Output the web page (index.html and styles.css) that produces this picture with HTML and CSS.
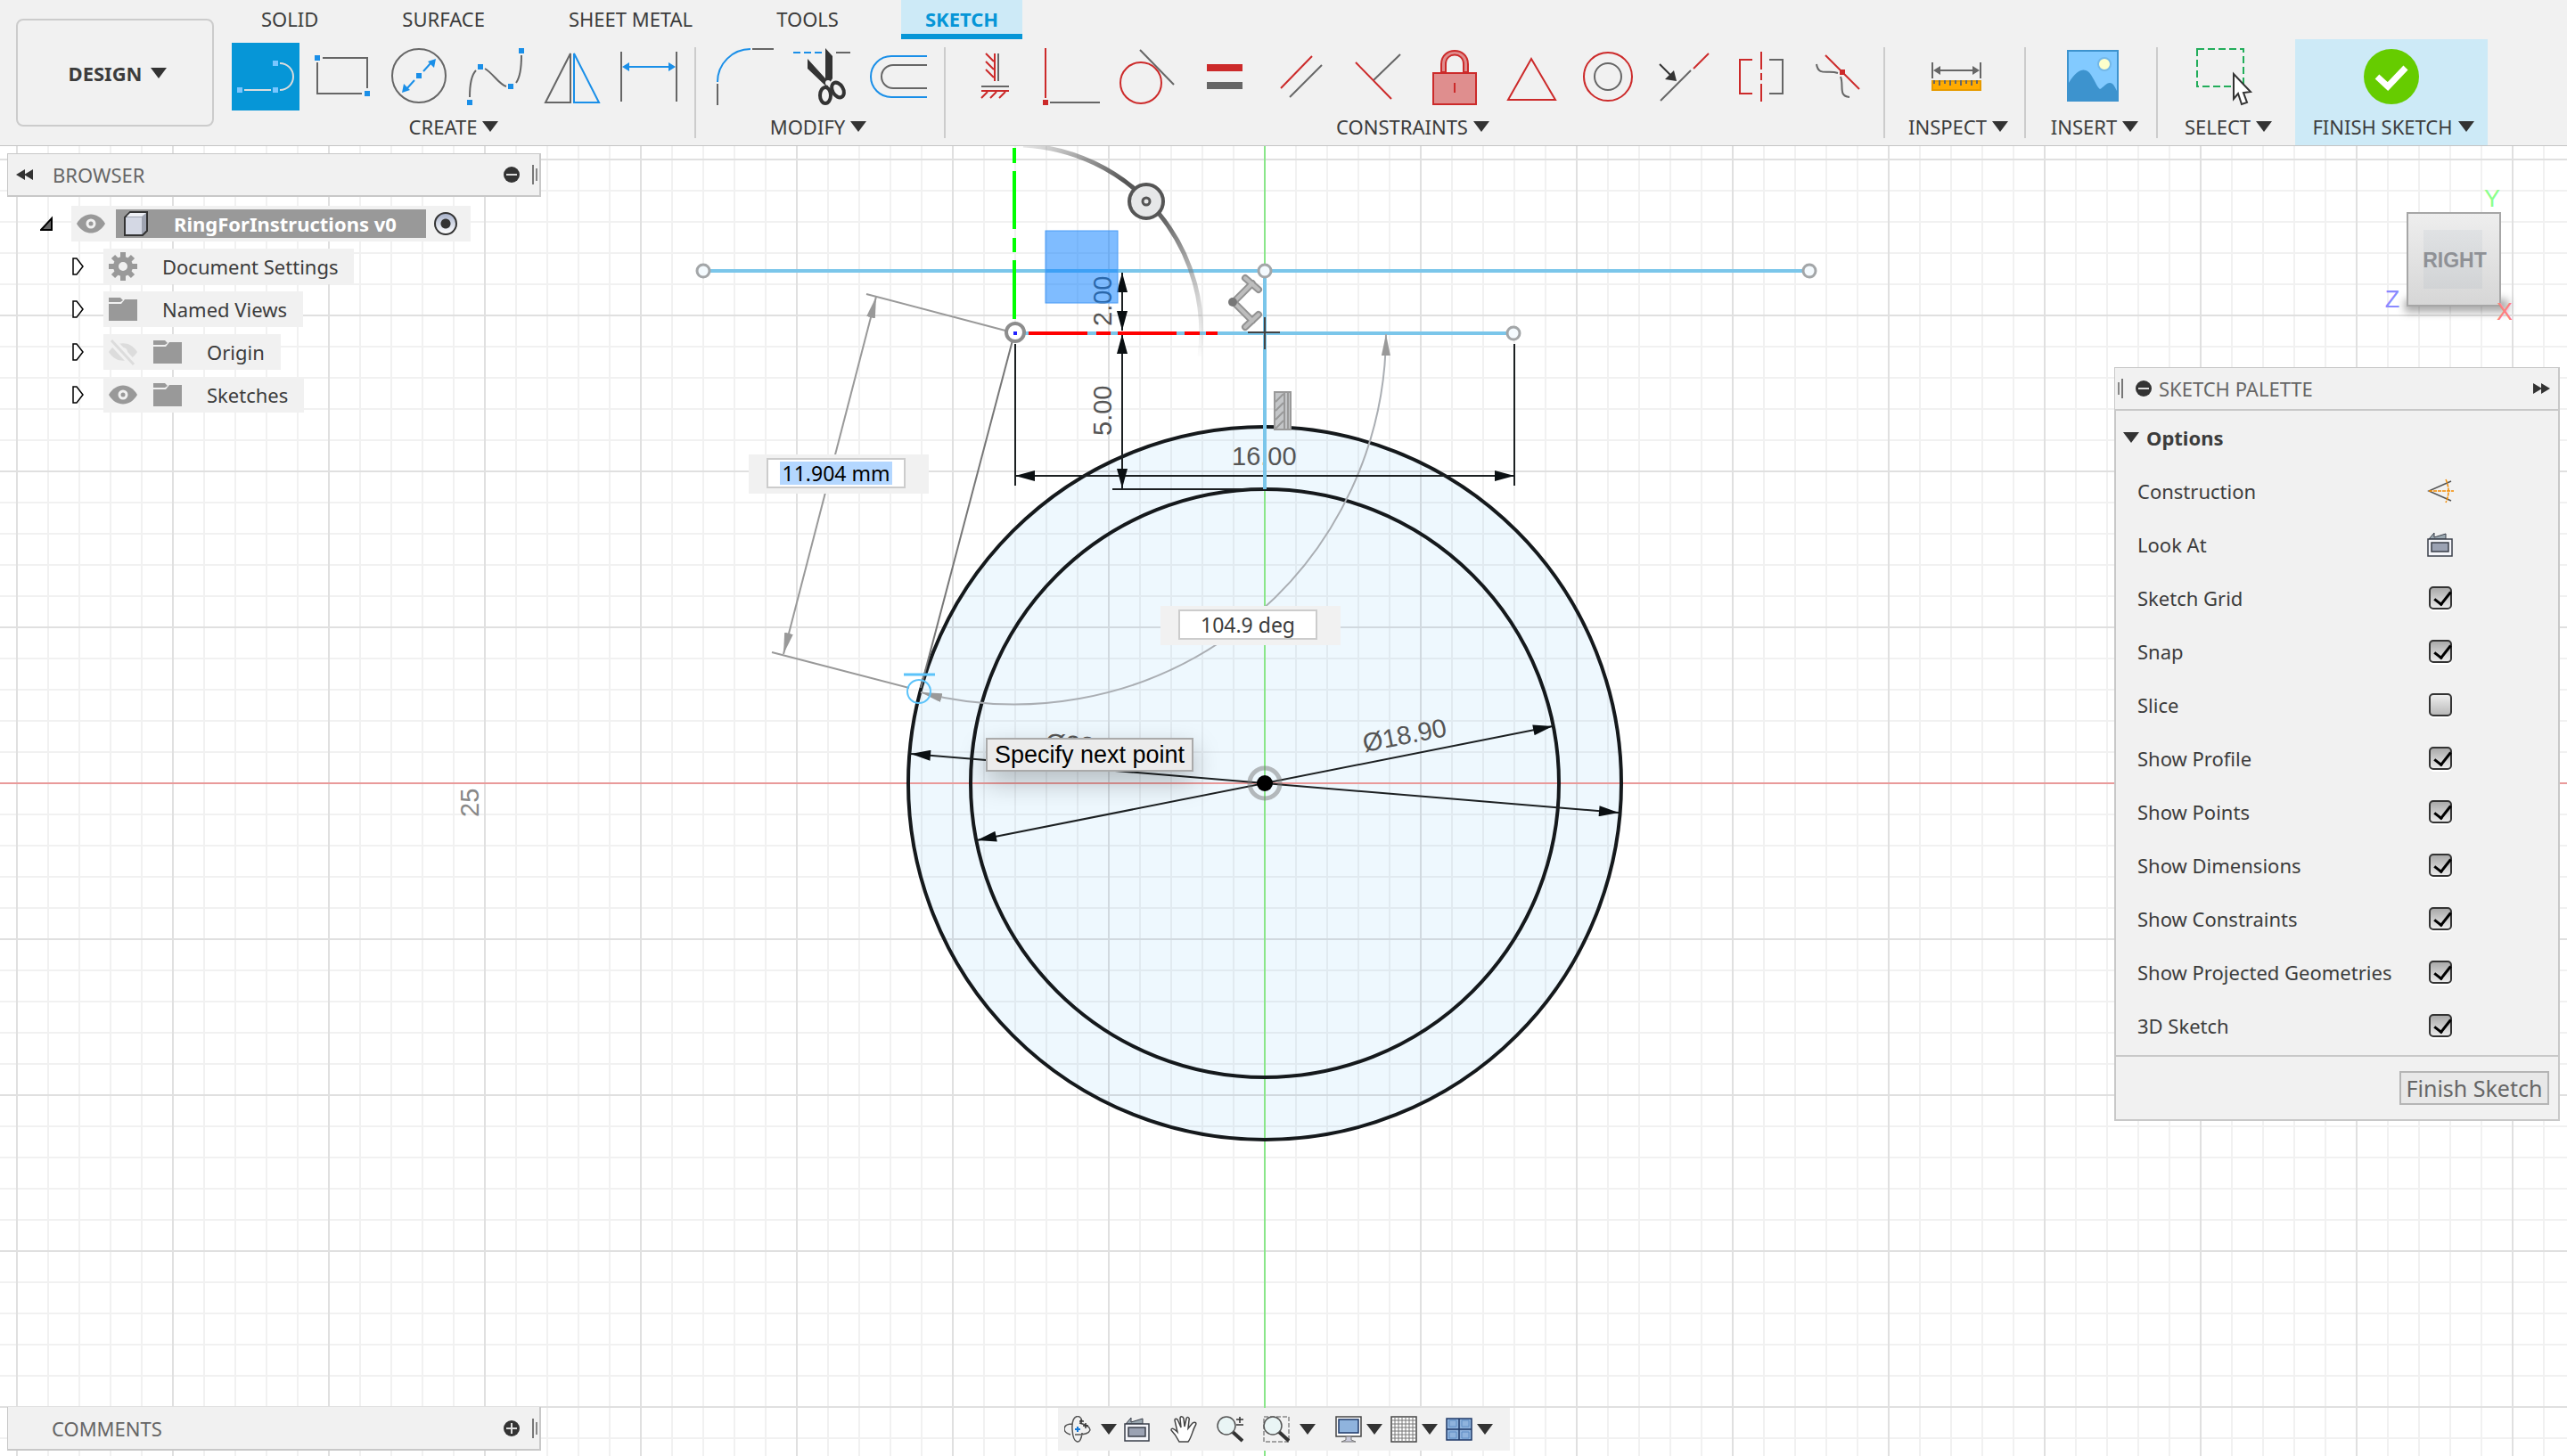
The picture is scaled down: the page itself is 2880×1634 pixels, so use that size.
FILE: index.html
```html
<!DOCTYPE html>
<html lang="en">
<head>
    <meta charset="UTF-8">
    <meta name="viewport" content="width=device-width, initial-scale=1.0">
    <title>RingForInstructions v0</title>
    <link rel="stylesheet" href="styles.css">
</head>
<body>
    <!-- shared icons -->
    <svg class="defs" aria-hidden="true">
        <symbol id="icon-folder" viewBox="0 0 32 32">
            <path d="M0 3h13l3 3-3 2H0z M0 10h14l4-5h14v24H0z" fill="#999"/>
        </symbol>
        <symbol id="icon-eye" viewBox="0 0 32 32">
            <path d="M0 16C8 2 24 2 32 16C24 30 8 30 0 16z" fill="#999"/>
            <circle cx="16" cy="16" r="4" fill="none" stroke="#f1f1f1" stroke-width="3"/>
        </symbol>
        <symbol id="icon-camera" viewBox="0 0 30 30">
            <path d="M2 9L8 2V7L21 3V9z" fill="#9aa7b0" stroke="#3a3f4a"/>
            <rect x="1" y="9" width="27" height="19" fill="#f4f5fa" stroke="#3a3f4a" stroke-width="1.5"/>
            <rect x="5" y="13" width="19" height="10" fill="#9ba2b3" stroke="#3a3f4a" stroke-width="1.5"/>
        </symbol>
        <symbol id="icon-rewind" viewBox="0 0 20 12">
            <path d="M0 6L10 0V12z M9 6L19 0V12z" fill="#333"/>
        </symbol>
        <symbol id="icon-minus" viewBox="0 0 18 18">
            <circle cx="9" cy="9" r="9" fill="#333"/>
            <path d="M3 9H15" stroke="#ddd" stroke-width="2"/>
        </symbol>
        <symbol id="icon-plus" viewBox="0 0 18 18">
            <circle cx="9" cy="9" r="9" fill="#333"/>
            <path d="M3 9H15M9 3V15" stroke="#ddd" stroke-width="2"/>
        </symbol>
    </svg>

    <header class="toolbar">
        <button class="design-btn">DESIGN <i class="caret"></i></button>
        <div class="toolbar-main">
            <nav class="tabs">
                <a href="#" class="tab">SOLID</a>
                <a href="#" class="tab">SURFACE</a>
                <a href="#" class="tab">SHEET METAL</a>
                <a href="#" class="tab">TOOLS</a>
                <a href="#" class="tab active">SKETCH</a>
            </nav>
            <div class="ribbon">
                <div class="group">
                    <div class="tools">
                        <button class="tool" aria-label="Line">
                            <svg class="selected" viewBox="0 0 76 76"><path d="M14 53H44M54 53a15 15 0 0 0 0-30" class="line light"/><path d="M6 50h6v6H6zM46 50h6v6h-6zM46 20h6v6h-6z" fill="#79c6ff"/></svg>
                        </button>
                        <button class="tool" aria-label="Rectangle">
                            <svg viewBox="0 0 76 76"><path d="M16 17H66V51M10 22V57H60" class="line"/><path d="M7 14h6v6H7zM63 54h6v6h-6z" class="dot"/></svg>
                        </button>
                        <button class="tool" aria-label="Circle">
                            <svg viewBox="0 0 76 76"><circle cx="38" cy="37" r="30" class="line"/><path d="M43 32L52 22M33 42L24 52" class="line blue"/><path d="M35 34h6v6h-6zM57 18l-2 10-7-7zM19 56l2-10 7 7z" class="dot"/></svg>
                        </button>
                        <button class="tool" aria-label="Spline">
                            <svg viewBox="0 0 76 76"><path d="M9 61C9 45 12 35 16 31M26 29C35 34 42 47 50 49M61 45C66 38 67 25 67 14" class="line"/><path d="M6 64h6v6H6zM18 24h6v6h-6zM52 46h6v6h-6zM64 6h6v6h-6z" class="dot"/></svg>
                        </button>
                        <button class="tool" aria-label="Mirror">
                            <svg viewBox="0 0 76 76"><path d="M36 12V67H8z" class="line"/><path d="M40 12V67H68z" class="line blue"/></svg>
                        </button>
                        <button class="tool" aria-label="Sketch Dimension">
                            <svg viewBox="0 0 76 76"><path d="M7 10V66M69 10V66" class="line"/><path d="M12 27H64" class="line blue"/><path d="M8 27l8-5v10zM68 27l-8-5v10z" class="dot"/></svg>
                        </button>
                    </div>
                    <button class="group-label">CREATE <i class="caret"></i></button>
                </div>
                <div class="divider"></div>
                <div class="group">
                    <div class="tools">
                        <button class="tool" aria-label="Fillet">
                            <svg viewBox="0 0 76 76"><path d="M7 44A37 37 0 0 1 44 7" class="line blue"/><path d="M46 7H70M7 46V70" class="line"/></svg>
                        </button>
                        <button class="tool" aria-label="Trim">
                            <svg viewBox="0 0 76 76"><path d="M6 11H38" class="line blue" stroke-dasharray="8 4"/><path d="M54 11H70" class="line"/><path d="M42 6L50 15V40L44 50L22 29V18L42 40z" fill="#333"/><ellipse cx="42" cy="59" rx="6" ry="9" class="ring"/><ellipse cx="56" cy="53" rx="6" ry="9" transform="rotate(-30 56 53)" class="ring"/><circle cx="45" cy="45" r="3" fill="#f1f1f1"/></svg>
                        </button>
                        <button class="tool" aria-label="Offset">
                            <svg viewBox="0 0 76 76"><path d="M70 15H30a23 23 0 0 0 0 46H70" class="line blue"/><path d="M70 25H32a13 13 0 0 0 0 26H70" class="line"/></svg>
                        </button>
                    </div>
                    <button class="group-label">MODIFY <i class="caret"></i></button>
                </div>
                <div class="divider"></div>
                <div class="group">
                    <div class="tools">
                        <button class="tool" aria-label="Horizontal/Vertical">
                            <svg viewBox="0 0 76 76"><path d="M38 12V43M28 12L37 21M28 21L37 30M28 30L37 39M23 54H54M23 62L30 55M33 62L40 55M43 62L50 55" class="line red"/><path d="M42 12V43M23 49H54" class="line"/></svg>
                        </button>
                        <button class="tool" aria-label="Coincident">
                            <svg viewBox="0 0 76 76"><path d="M9 6V62" class="line red"/><path d="M14 67H70" class="line"/><path d="M6 64h6v6H6z" fill="#cc2a2a"/></svg>
                        </button>
                        <button class="tool" aria-label="Tangent">
                            <svg viewBox="0 0 76 76"><path d="M29 8L67 47" class="line"/><circle cx="30" cy="45" r="23" class="line red"/></svg>
                        </button>
                        <button class="tool" aria-label="Equal">
                            <svg viewBox="0 0 76 76"><path d="M18 24h40v8H18z" fill="#cc2a2a"/><path d="M18 44h40v8H18z" fill="#666"/></svg>
                        </button>
                        <button class="tool" aria-label="Parallel">
                            <svg viewBox="0 0 76 76"><path d="M15 51L50 15" class="line red"/><path d="M25 61L61 25" class="line"/></svg>
                        </button>
                        <button class="tool" aria-label="Perpendicular">
                            <svg viewBox="0 0 76 76"><path d="M33 42L63 13" class="line"/><path d="M13 22L53 63" class="line red"/></svg>
                        </button>
                        <button class="tool" aria-label="Fix">
                            <svg viewBox="0 0 76 76"><path d="M23 33V24C23 4 53 4 53 24V33H48V24C48 10 28 10 28 24V33zM14 34h48v35H14z" fill="#df8e8e" stroke="#cc2a2a" stroke-width="2"/><path d="M38 45V56" class="line red"/></svg>
                        </button>
                        <button class="tool" aria-label="Midpoint">
                            <svg viewBox="0 0 76 76"><path d="M38 18L65 64H12z" class="line red"/></svg>
                        </button>
                        <button class="tool" aria-label="Concentric">
                            <svg viewBox="0 0 76 76"><circle cx="38" cy="38" r="27" class="line red"/><circle cx="38" cy="38" r="15" class="line"/></svg>
                        </button>
                        <button class="tool" aria-label="Collinear">
                            <svg viewBox="0 0 76 76"><path d="M11 65L45 31" class="line"/><path d="M48 29L65 12" class="line red"/><path d="M10 24L24 38" stroke="#333" stroke-width="2"/><path d="M29 43L16 41L26 31z" fill="#333"/></svg>
                        </button>
                        <button class="tool" aria-label="Symmetry">
                            <svg viewBox="0 0 76 76"><path d="M28 19H14V57H28M38 10V30M38 34V42M38 46V66" class="line red"/><path d="M47 19H62V57H47" class="line"/></svg>
                        </button>
                        <button class="tool" aria-label="Curvature">
                            <svg viewBox="0 0 76 76"><path d="M14 24C16 38 27 30 38 34M41 38C45 48 38 60 51 61" class="line"/><path d="M24 14L62 52" class="line red"/><path d="M40 30h6v6h-6z" fill="#cc2a2a"/></svg>
                        </button>
                    </div>
                    <button class="group-label">CONSTRAINTS <i class="caret"></i></button>
                </div>
                <div class="divider"></div>
                <div class="group">
                    <button class="menu-tool">
                        <svg viewBox="0 0 76 76"><path d="M11 22V40M65 22V40M14 31H62" class="line"/><path d="M12 31l8-5v10zM64 31l-8-5v10z" fill="#666"/><path d="M11 43h54v10H11z" fill="#ffab00" stroke="#e69a00" stroke-width="2"/><path d="M13 42v4M19 42v6M25 42v4M31 42v6M37 42v4M43 42v6M49 42v4M55 42v6M61 42v4" stroke="#666" stroke-width="2"/></svg>
                        <span class="group-label">INSPECT <i class="caret"></i></span>
                    </button>
                </div>
                <div class="divider"></div>
                <div class="group">
                    <button class="menu-tool insert">
                        <svg viewBox="0 0 76 76"><path d="M10 9h56v56H10z" fill="#82caff" stroke="#3d93ce" stroke-width="2"/><circle cx="51" cy="24" r="7" fill="#fdffcb" stroke="#74b8e8" stroke-width="2"/><path d="M11 45C22 27 31 28 36 36C41 44 43 50 46 52C50 50 53 45 57 45C61 45 63 50 65 54V65H11z" fill="#3d93ce"/></svg>
                        <span class="group-label">INSERT <i class="caret"></i></span>
                    </button>
                </div>
                <div class="divider"></div>
                <div class="group">
                    <button class="menu-tool select">
                        <svg viewBox="0 0 76 76"><path d="M3 7H55V49H3z" fill="none" stroke="#22ad5a" stroke-width="2" stroke-dasharray="8 4"/><path d="M44 35V63L49 57L53 69L59 67L55 56L63 55z" fill="#fff" stroke="#333" stroke-width="2"/></svg>
                        <span class="group-label">SELECT <i class="caret"></i></span>
                    </button>
                </div>
                <button class="menu-tool finish">
                    <svg viewBox="0 0 76 76"><circle cx="38" cy="38" r="31" fill="#66cc00"/><path d="M22 38L34 49L54 28" fill="none" stroke="#fff" stroke-width="7"/></svg>
                    <span class="group-label">FINISH SKETCH <i class="caret"></i></span>
                </button>
            </div>
        </div>
    </header>

    <main class="workspace">
        <svg class="canvas" viewBox="0 164 2880 1470" preserveAspectRatio="xMidYMid slice">
            <defs>
                <pattern id="minor" x="1418" y="878" width="35" height="35" patternUnits="userSpaceOnUse">
                    <path d="M0 1H35M1 0V35" stroke="#000" stroke-opacity=".055" stroke-width="2"/>
                </pattern>
                <pattern id="major" x="1418" y="878" width="175" height="175" patternUnits="userSpaceOnUse">
                    <path d="M0 1H175M1 0V175" stroke="#000" stroke-opacity=".07" stroke-width="2"/>
                </pattern>
                <marker id="arrow" markerUnits="userSpaceOnUse" markerWidth="24" markerHeight="12" refX="24" refY="6" orient="auto-start-reverse">
                    <path d="M24 6L2 0V12z" fill="#0a0f12"/>
                </marker>
                <marker id="arrow-gray" markerUnits="userSpaceOnUse" markerWidth="24" markerHeight="10" refX="24" refY="5" orient="auto-start-reverse">
                    <path d="M24 5L0 0V10z" fill="#999"/>
                </marker>
                <linearGradient id="fade" gradientUnits="userSpaceOnUse" x1="1140" y1="164" x2="1350" y2="400">
                    <stop offset="0" stop-color="#666" stop-opacity=".1"/>
                    <stop offset=".35" stop-color="#555"/>
                    <stop offset=".55" stop-color="#666"/>
                    <stop offset="1" stop-color="#999" stop-opacity="0"/>
                </linearGradient>
            </defs>

            <!-- profile, grid and axes -->
            <circle cx="1419" cy="879" r="400" fill="#eef8fe"/>
            <rect y="164" width="2880" height="1470" fill="url(#minor)"/>
            <rect y="164" width="2880" height="1470" fill="url(#major)"/>
            <path d="M0 879H2880" stroke="#e99a9a" stroke-width="2"/>
            <path d="M1419 164V1634" stroke="#8ae68a" stroke-width="2"/>
            <text transform="translate(537 917) rotate(-90)" class="dim axis">25</text>

            <!-- ring -->
            <g fill="none" stroke="#15191c" stroke-width="4">
                <circle cx="1419" cy="879" r="400"/>
                <circle cx="1419" cy="879" r="330"/>
            </g>

            <!-- sketch lines -->
            <path d="M789 304H2030M1138 374H1698" stroke="#7bc6ea" stroke-width="4"/>

            <!-- measured line and angle -->
            <g fill="none" stroke="#999" stroke-width="2">
                <path d="M972 330L1128 371M866 732L1020 772"/>
                <path d="M983 333L879 734" marker-start="url(#arrow-gray)" marker-end="url(#arrow-gray)"/>
                <path d="M1555 375A417 417 0 0 1 1033 777" stroke="#aaaeb3" marker-start="url(#arrow-gray)" marker-end="url(#arrow-gray)"/>
                <path d="M1136 382L1033 772" stroke="#777"/>
            </g>

            <!-- dimensions -->
            <g fill="none" stroke="#1c2022" stroke-width="2">
                <path d="M1139 386V545M1699 386V545M1248 549H1419"/>
                <path d="M1139 534H1699" marker-start="url(#arrow)" marker-end="url(#arrow)"/>
                <path d="M1259 306V371" marker-start="url(#arrow)" marker-end="url(#arrow)"/>
                <path d="M1259 375V548" marker-start="url(#arrow)" marker-end="url(#arrow)"/>
                <path d="M1022 846L1816 912" marker-start="url(#arrow)" marker-end="url(#arrow)"/>
                <path d="M1096 943L1742 815" marker-start="url(#arrow)" marker-end="url(#arrow)"/>
            </g>
            <text transform="translate(1247 366) rotate(-90)" class="dim">2.00</text>
            <text transform="translate(1247 489) rotate(-90)" class="dim">5.00</text>
            <text x="1382" y="522" class="dim">16.00</text>
            <text transform="translate(1531 844) rotate(-11)" class="dim">Ø18.90</text>
            <text transform="translate(1172 843) rotate(5)" class="dim">Ø22.90</text>
            <path d="M1419 304V549" stroke="#7bc6ea" stroke-width="4"/>

            <!-- manipulator -->
            <rect x="1173" y="259" width="81" height="81" fill="#007aff" fill-opacity=".5" stroke="#4a9cf5" stroke-width="1"/>
            <path d="M1148 163A210 210 0 0 1 1346 400" fill="none" stroke="url(#fade)" stroke-width="5"/>
            <circle cx="1286" cy="226" r="19" fill="#e6e7e8" stroke="#555" stroke-width="4"/>
            <circle cx="1286" cy="226" r="4" fill="none" stroke="#555" stroke-width="3"/>
            <path d="M1138 166V183M1138 192V257M1138 267V283M1138 292V358" stroke="#0f0" stroke-width="4"/>
            <path d="M1154 374H1220M1230 374H1246M1254 374H1320M1329 374H1346M1353 374H1366" stroke="#f00" stroke-width="4"/>

            <!-- points -->
            <g fill="#f4fafe" stroke="#a3a6a8" stroke-width="3">
                <circle cx="789" cy="304" r="7"/>
                <circle cx="1419" cy="304" r="7"/>
                <circle cx="2030" cy="304" r="7"/>
                <circle cx="1698" cy="374" r="7"/>
            </g>
            <circle cx="1139" cy="373" r="10" fill="#fff" stroke="#8d8d8d" stroke-width="4"/>
            <rect x="1137" y="372" width="4" height="4" fill="#22f"/>
            <path d="M1400 373H1436M1419 356V392" stroke="#444" stroke-width="2"/>
            <circle cx="1419" cy="879" r="17" fill="none" stroke="#777" stroke-opacity=".5" stroke-width="5"/>
            <circle cx="1419" cy="879" r="9" fill="#000"/>
            <circle cx="1031" cy="776" r="13" fill="none" stroke="#5cc3fa" stroke-width="2"/>
            <path d="M1014 757H1049" stroke="#5cc3fa" stroke-width="3"/>

            <!-- constraint glyphs -->
            <g fill="none" stroke-linecap="round" stroke-linejoin="round">
                <path d="M1397 312L1412 325M1405 318L1384 339L1405 360M1397 367L1412 353" stroke="#929292" stroke-width="8"/>
                <path d="M1397 312L1412 325M1405 318L1384 339L1405 360M1397 367L1412 353" stroke="#bdbdbd" stroke-width="4"/>
            </g>
            <circle cx="1383" cy="339" r="5" fill="#777"/>
            <rect x="1430" y="440" width="18" height="42" fill="#c4c6c8" stroke="#999" stroke-width="2"/>
            <path d="M1441 440V482M1445 440V482M1431 451L1440 442M1431 461L1440 452M1431 471L1440 462M1431 481L1440 472" stroke="#999" stroke-width="2"/>
        </svg>

        <div class="value-box length"><input type="text" value="11.904 mm" aria-label="Length"></div>
        <div class="value-box angle"><input type="text" value="104.9 deg" aria-label="Angle"></div>
        <div class="tooltip">Specify next point</div>

        <div class="panels">
            <section class="browser">
                <div class="panel-bar">
                    <svg class="rewind"><use href="#icon-rewind"/></svg>
                    <h2>BROWSER</h2>
                    <svg class="toggle"><use href="#icon-minus"/></svg>
                    <i class="grip"></i>
                </div>
                <ul class="tree">
                    <li class="root">
                        <svg class="twisty" viewBox="0 0 14 20"><path d="M13 4V17H1z" fill="#666" stroke="#000" stroke-width="2"/></svg>
                        <div class="node">
                            <svg class="icon"><use href="#icon-eye"/></svg>
                            <div class="doc">
                                <svg viewBox="0 0 28 28"><path d="M1 7L7 1H26V22L21 27H1z" fill="#9fa4b1" stroke="#333" stroke-width="2"/><path d="M2 7H20V26H2z" fill="#d4d8e4"/><path d="M3 6L7 2H25L20 6z" fill="#eef0f5"/></svg>
                                <span>RingForInstructions v0</span>
                            </div>
                            <input type="radio" checked aria-label="Activate component">
                        </div>
                    </li>
                    <li>
                        <svg class="twisty" viewBox="0 0 14 20"><path d="M1 1L5 1L12 10L5 19H1z" fill="#fff" stroke="#000" stroke-width="1.5"/></svg>
                        <div class="node">
                            <svg class="icon" viewBox="0 0 32 32"><path d="M16 0V32M0 16H32M5 5L27 27M27 5L5 27" stroke="#999" stroke-width="6"/><circle cx="16" cy="16" r="8" fill="#f1f1f1" stroke="#999" stroke-width="6"/></svg>
                            <span>Document Settings</span>
                        </div>
                    </li>
                    <li>
                        <svg class="twisty" viewBox="0 0 14 20"><path d="M1 1L5 1L12 10L5 19H1z" fill="#fff" stroke="#000" stroke-width="1.5"/></svg>
                        <div class="node">
                            <svg class="icon"><use href="#icon-folder"/></svg>
                            <span>Named Views</span>
                        </div>
                    </li>
                    <li>
                        <svg class="twisty" viewBox="0 0 14 20"><path d="M1 1L5 1L12 10L5 19H1z" fill="#fff" stroke="#000" stroke-width="1.5"/></svg>
                        <div class="node">
                            <svg class="icon" viewBox="0 0 32 32"><path d="M0 16C8 3 24 3 32 16C24 29 8 29 0 16z" fill="#dcdcdc"/><circle cx="16" cy="16" r="5" fill="#f1f1f1"/><path d="M2 2L28 30" stroke="#f1f1f1" stroke-width="9"/><path d="M3 3L28 30" stroke="#dcdcdc" stroke-width="3"/></svg>
                            <svg class="icon second"><use href="#icon-folder"/></svg>
                            <span>Origin</span>
                        </div>
                    </li>
                    <li>
                        <svg class="twisty" viewBox="0 0 14 20"><path d="M1 1L5 1L12 10L5 19H1z" fill="#fff" stroke="#000" stroke-width="1.5"/></svg>
                        <div class="node">
                            <svg class="icon"><use href="#icon-eye"/></svg>
                            <svg class="icon second"><use href="#icon-folder"/></svg>
                            <span>Sketches</span>
                        </div>
                    </li>
                </ul>
            </section>

            <div class="right">
                <svg class="viewcube" viewBox="2670 202 160 170">
                    <defs>
                        <linearGradient id="cube" x1="0" y1="0" x2="0" y2="1"><stop offset="0" stop-color="#eee"/><stop offset="1" stop-color="#d6d6d6"/></linearGradient>
                        <filter id="soft" x="-20%" y="-100%" width="140%" height="300%"><feGaussianBlur stdDeviation="5"/></filter>
                    </defs>
                    <rect x="2698" y="336" width="116" height="14" fill="#000" fill-opacity=".35" filter="url(#soft)"/>
                    <rect x="2701" y="239" width="104" height="104" fill="url(#cube)" stroke="#a6a6a6" stroke-width="2"/>
                    <rect x="2719" y="258" width="66" height="66" fill="#8a9ab0" fill-opacity=".1"/>
                    <text x="2754" y="300" text-anchor="middle" class="face">RIGHT</text>
                    <text x="2796" y="232" text-anchor="middle" fill="#8cff8c" class="axis-name">Y</text>
                    <text x="2684" y="345" text-anchor="middle" fill="#8a8aff" class="axis-name">Z</text>
                    <text x="2810" y="359" text-anchor="middle" fill="#ff7f7f" class="axis-name">X</text>
                </svg>

                <section class="palette">
                    <div class="panel-bar palette-bar">
                        <i class="grip flip"></i>
                        <svg class="toggle"><use href="#icon-minus"/></svg>
                        <h2>SKETCH PALETTE</h2>
                        <svg class="rewind flip"><use href="#icon-rewind"/></svg>
                    </div>
                    <div class="options">
                        <h3><i class="caret"></i>Options</h3>
                        <div class="option">
                            <span>Construction</span>
                            <button class="option-btn" aria-label="Construction">
                                <svg viewBox="0 0 30 30"><path d="M27 4L2 15L27 26" fill="none" stroke="#555" stroke-width="1.5"/><path d="M2 15H30M21 2Q27 15 21 28" fill="none" stroke="#f38b00" stroke-width="1.5" stroke-dasharray="4 1"/></svg>
                            </button>
                        </div>
                        <div class="option">
                            <span>Look At</span>
                            <button class="option-btn" aria-label="Look At"><svg><use href="#icon-camera"/></svg></button>
                        </div>
                        <label class="option"><span>Sketch Grid</span><input type="checkbox" checked></label>
                        <label class="option"><span>Snap</span><input type="checkbox" checked></label>
                        <label class="option"><span>Slice</span><input type="checkbox"></label>
                        <label class="option"><span>Show Profile</span><input type="checkbox" checked></label>
                        <label class="option"><span>Show Points</span><input type="checkbox" checked></label>
                        <label class="option"><span>Show Dimensions</span><input type="checkbox" checked></label>
                        <label class="option"><span>Show Constraints</span><input type="checkbox" checked></label>
                        <label class="option"><span>Show Projected Geometries</span><input type="checkbox" checked></label>
                        <label class="option"><span>3D Sketch</span><input type="checkbox" checked></label>
                    </div>
                    <div class="palette-footer">
                        <button class="finish-btn">Finish Sketch</button>
                    </div>
                </section>
            </div>
        </div>

        <footer class="bottom">
            <div class="panel-bar comments">
                <h2>COMMENTS</h2>
                <svg class="toggle"><use href="#icon-plus"/></svg>
                <i class="grip"></i>
            </div>
            <div class="navbar">
                <button class="nav-btn wide" aria-label="Orbit">
                    <svg viewBox="0 0 30 30"><path d="M20 19C19 33 10 33 9 15S19-2 20 6M7 21C-3 18-2 9 9 9M17 8C35 12 32 22 12 21" fill="none" stroke="#555" stroke-width="1.5"/><path d="M15 12v6M12 15h6" stroke="#1177d8" stroke-width="2"/><path d="M19 4v5M17 6h5M24 8v6M21 11h6" stroke="#333" stroke-width="1.5"/></svg>
                    <i class="caret"></i>
                </button>
                <button class="nav-btn" aria-label="Look At"><svg><use href="#icon-camera"/></svg></button>
                <button class="nav-btn" aria-label="Pan">
                    <svg viewBox="0 0 30 30"><path d="M10 29C7 23 5 20 1 16C1 13 4 14 8 18L5 5C5 2 8 3 9 6L12 13L11 3C11 0 14 0 15 3L16 12L18 3C19 0 22 2 21 5L20 14L25 8C28 6 30 8 28 11C25 16 24 24 20 29z" fill="#fff" stroke="#444" stroke-width="1.5"/></svg>
                </button>
                <button class="nav-btn" aria-label="Zoom">
                    <svg viewBox="0 0 30 30"><path d="M18 18L29 28" stroke="#333" stroke-width="4"/><circle cx="11" cy="11" r="10" fill="#e9f5f5" stroke="#555" stroke-width="1.5"/><path d="M26 1v7M22 4h8M22 10h8" stroke="#333" stroke-width="1.5"/></svg>
                </button>
                <button class="nav-btn wide" aria-label="Fit">
                    <svg viewBox="0 0 30 30"><path d="M1 1H29V29H1z" fill="none" stroke="#888" stroke-width="1.5" stroke-dasharray="5 2"/><path d="M18 18L29 28" stroke="#333" stroke-width="4"/><circle cx="11" cy="11" r="10" fill="#e9f5f5" stroke="#555" stroke-width="1.5"/></svg>
                    <i class="caret"></i>
                </button>
                <button class="nav-btn tight" aria-label="Display Settings">
                    <svg viewBox="0 0 30 30"><path d="M1 1H29V23H1z" fill="#fff" stroke="#444" stroke-width="1.5"/><path d="M4 4H26V19H4z" fill="#8fb3dd" stroke="#1f3a68" stroke-width="1.5"/><path d="M12 23h6v4l5 2H7l5-2z" fill="#ccd" stroke="#777"/></svg>
                    <i class="caret"></i>
                </button>
                <button class="nav-btn tight" aria-label="Grid and Snaps">
                    <svg viewBox="0 0 30 30"><path d="M1 1H29V29H1z" fill="#fff" stroke="#444" stroke-width="1.5"/><path d="M5 1V29M9 1V29M13 1V29M17 1V29M21 1V29M25 1V29M1 5H29M1 9H29M1 13H29M1 17H29M1 21H29M1 25H29" stroke="#777"/></svg>
                    <i class="caret"></i>
                </button>
                <button class="nav-btn tight" aria-label="Viewports">
                    <svg viewBox="0 0 30 30"><path d="M1 3H29V27H1z" fill="#8fb3dd" stroke="#1f3a68" stroke-width="1.5"/><path d="M15 3V27M1 15H29" stroke="#1f3a68" stroke-width="1.5"/><path d="M4 5h8v7H4zM18 5h8v7h-8zM4 18h8v7H4zM18 18h8v7h-8z" fill="none" stroke="#5f8dc4"/></svg>
                    <i class="caret"></i>
                </button>
            </div>
        </footer>
    </main>
</body>
</html>
```
FILE: styles.css
```css
* {
    margin: 0;
    padding: 0;
    box-sizing: border-box;
}

body {
    display: flex;
    flex-direction: column;
    min-height: 100vh;
    font-family: "Noto Sans", "Open Sans", sans-serif;
    font-size: 22px;
    line-height: 30px;
    color: #3c3c3c;
    background: #fff;
}

button {
    font: inherit;
    color: inherit;
    background: none;
    border: none;
    cursor: pointer;
}

svg {
    display: block;
}

.defs {
    position: absolute;
    width: 0;
    height: 0;
}

.caret {
    display: inline-block;
    flex: none;
    border-left: 9px solid transparent;
    border-right: 9px solid transparent;
    border-top: 12px solid #333;
}

/* toolbar */
.toolbar {
    display: flex;
    align-items: flex-start;
    background: #f1f1f1;
    border-bottom: 1px solid #c4c4c4;
}

.design-btn {
    display: flex;
    align-items: center;
    justify-content: center;
    gap: 10px;
    width: 222px;
    height: 121px;
    margin: 21px 0 0 18px;
    padding-left: 6px;
    border: 2px solid #ccc;
    border-radius: 8px;
    font-weight: 700;
}

.tabs {
    display: flex;
    gap: 46px;
    height: 44px;
    padding-left: 29px;
}

.tab {
    padding: 6px 24px 0;
    color: #3c3c3c;
    text-decoration: none;
}

.tab.active {
    padding: 6px 27px 0;
    color: #0696d7;
    background: #cdeaf7;
    border-bottom: 6px solid #0696d7;
    font-weight: 700;
}

.ribbon {
    display: flex;
    align-items: center;
    height: 119px;
    padding-left: 3px;
}

.divider {
    width: 2px;
    height: 102px;
    background: #ccc;
}

.group {
    padding: 4px 8px 0 12px;
    align-self: flex-start;
}

.tools {
    display: flex;
}

.tool {
    width: 86px;
}

.tool svg,
.menu-tool svg {
    width: 76px;
    height: 76px;
    margin: 0 auto;
}

.selected {
    background: #0696d7;
}

.group-label {
    display: flex;
    align-items: center;
    justify-content: center;
    gap: 6px;
    width: 100%;
    height: 36px;
    padding-right: 8px;
    white-space: nowrap;
}

.menu-tool {
    width: 136px;
}

.menu-tool .group-label {
    padding: 0 0 0 4px;
}

.insert {
    width: 126px;
}

.select {
    width: 134px;
}

.select .group-label {
    padding: 0;
}

.finish {
    display: flex;
    flex-direction: column;
    align-self: stretch;
    width: 216px;
    padding-top: 4px;
    background: #cdeaf7;
}

.line {
    fill: none;
    stroke: #666;
    stroke-width: 2;
}

.light {
    stroke: #dcdcdc;
}

.blue {
    stroke: #1a8fe8;
}

.red {
    stroke: #cc2a2a;
}

.dot {
    fill: #1a8fe8;
}

.ring {
    fill: none;
    stroke: #333;
    stroke-width: 4;
}

/* workspace */
.workspace {
    position: relative;
    display: flex;
    flex: 1;
    flex-direction: column;
    justify-content: space-between;
    overflow: hidden;
}

.canvas {
    position: absolute;
    inset: 0;
    width: 100%;
    height: 100%;
}

.dim {
    font-family: "Liberation Sans", Arial, sans-serif;
    font-size: 29px;
    fill: #555;
}

.axis {
    fill: #888;
}

.value-box {
    position: absolute;
    z-index: 1;
    width: 202px;
    height: 44px;
    padding: 4px 20px;
    background: #f1f1f1;
}

.value-box input {
    display: block;
    height: 34px;
    width: 156px;
    padding: 2px 13px;
    border: 2px solid #ccc;
    background: #fff;
    font: inherit;
    font-size: 23px;
    color: #3c3c3c;
    text-align: center;
}

.length {
    left: 840px;
    top: 346px;
}

.length input {
    background: linear-gradient(#b4d7ff, #b4d7ff) content-box, #fff;
    color: #000;
}

.angle {
    left: 1302px;
    top: 516px;
}

.tooltip {
    position: absolute;
    z-index: 1;
    left: 1106px;
    top: 664px;
    padding: 2px 8px;
    border: 2px solid #aaa;
    background: #ececec;
    box-shadow: 0 12px 30px rgba(0, 0, 0, 0.25);
    font-family: "Liberation Sans", Arial, sans-serif;
    font-size: 27px;
    line-height: 30px;
    color: #000;
    white-space: nowrap;
}

.panels {
    position: relative;
    display: flex;
    justify-content: space-between;
    align-items: flex-start;
    padding: 8px 8px 0;
}

.panel-bar {
    display: flex;
    align-items: center;
    height: 49px;
    padding: 0 2px 0 9px;
    background: #f1f1f1;
    border: 1px solid #c8c8c8;
    border-width: 1px 2px 2px 1px;
}

.panel-bar h2 {
    flex: 1;
    font-size: 22px;
    font-weight: 400;
    color: #666;
}

.rewind {
    width: 20px;
    height: 12px;
    margin-right: 21px;
}

.toggle {
    width: 18px;
    height: 18px;
}

.grip {
    width: 6px;
    height: 22px;
    margin-left: 14px;
    border-left: 2px solid #777;
    background: linear-gradient(#888, #888) no-repeat 2px 4px / 2px 14px;
}

.browser,
.comments {
    width: 599px;
}

/* tree */
.tree {
    list-style: none;
    padding-top: 10px;
}

.tree li {
    display: flex;
    align-items: center;
    gap: 21px;
    margin-bottom: 8px;
    padding-left: 73px;
}

.tree .root {
    padding-left: 37px;
}

.twisty {
    width: 14px;
    height: 20px;
}

.node {
    display: flex;
    align-items: center;
    height: 40px;
    padding: 0 18px 0 6px;
    background: #f1f1f1;
}

.node span {
    padding-left: 28px;
}

.icon {
    width: 32px;
    height: 32px;
}

.second {
    margin-left: 18px;
}

.doc {
    display: flex;
    align-items: center;
    width: 348px;
    height: 32px;
    margin: 0 9px 0 12px;
    padding-left: 9px;
    background: #999;
    color: #fff;
    font-weight: 700;
    white-space: nowrap;
}

.doc svg {
    flex: none;
    width: 28px;
    height: 28px;
}

.root .node {
    padding-right: 15px;
}

.root input {
    appearance: none;
    width: 26px;
    height: 26px;
    border: 2px solid #333;
    border-radius: 50%;
    background: radial-gradient(circle, #333 5px, transparent 6px), linear-gradient(#a9b3cc, #fff);
}

/* right side */
.right {
    display: flex;
    flex-direction: column;
    align-items: flex-end;
    padding-top: 30px;
}

.viewcube {
    width: 160px;
    height: 170px;
    margin: 0 42px 40px 0;
}

.face {
    font-family: "Liberation Sans", Arial, sans-serif;
    font-size: 23px;
    font-weight: 700;
    fill: #8f9196;
}

.axis-name {
    font-family: "Liberation Sans", Arial, sans-serif;
    font-size: 27px;
}

.palette {
    width: 500px;
}

.palette-bar {
    padding: 0 9px 0 3px;
}

.palette-bar .toggle {
    margin: 0 8px 0 14px;
}

.flip {
    transform: scaleX(-1);
}

.palette-bar .grip,
.palette-bar .rewind {
    margin: 0;
}

.options {
    padding: 10px 8px 3px;
    background: #f1f1f1;
    border: 2px solid #c8c8c8;
    border-top: 0;
}

.options h3 {
    display: flex;
    align-items: center;
    gap: 8px;
    height: 40px;
    margin-bottom: 10px;
    font-size: 22px;
    font-weight: 700;
}

.option {
    display: flex;
    align-items: center;
    justify-content: space-between;
    height: 60px;
    padding: 0 111px 0 16px;
}

.option-btn {
    margin-right: -2px;
}

.option-btn svg {
    width: 30px;
    height: 30px;
}

.option input {
    appearance: none;
    width: 26px;
    height: 26px;
    border: 2px solid #333;
    border-radius: 5px;
    background: linear-gradient(#eee, #b9b9b9);
    box-shadow: 0 2px 0 #fff;
}

.option input:checked {
    background: linear-gradient(#aaa, #eaeaea);
}

.option input:checked::before {
    content: "";
    display: block;
    width: 8px;
    height: 16px;
    margin: 0 0 0 8px;
    border: solid #000;
    border-width: 0 3px 3px 0;
    transform: rotate(38deg);
}

.palette-footer {
    display: flex;
    justify-content: flex-end;
    padding: 16px 10px;
    background: #f1f1f1;
    border: 2px solid #c8c8c8;
    border-top: 0;
}

.finish-btn {
    width: 168px;
    height: 38px;
    border: 2px solid #b5b5b5;
    background: #e8e8e8;
    color: #666;
    font-size: 25px;
    line-height: 32px;
    white-space: nowrap;
}

/* bottom */
.bottom {
    position: relative;
    display: grid;
    grid-template-columns: 1fr auto 1fr;
    align-items: end;
    padding: 0 8px 6px;
}

.comments {
    padding-left: 49px;
    border-top: 0;
}

.navbar {
    display: flex;
    gap: 22px;
    height: 48px;
    padding: 0 19px 0 7px;
    background: #f1f1f1;
}

.nav-btn {
    display: flex;
    align-items: center;
    gap: 5px;
}

.nav-btn svg {
    width: 30px;
    height: 30px;
}

.wide {
    gap: 11px;
}

.wide:first-child {
    margin-right: -14px;
}

.tight + .tight {
    margin-left: -13px;
}
```
